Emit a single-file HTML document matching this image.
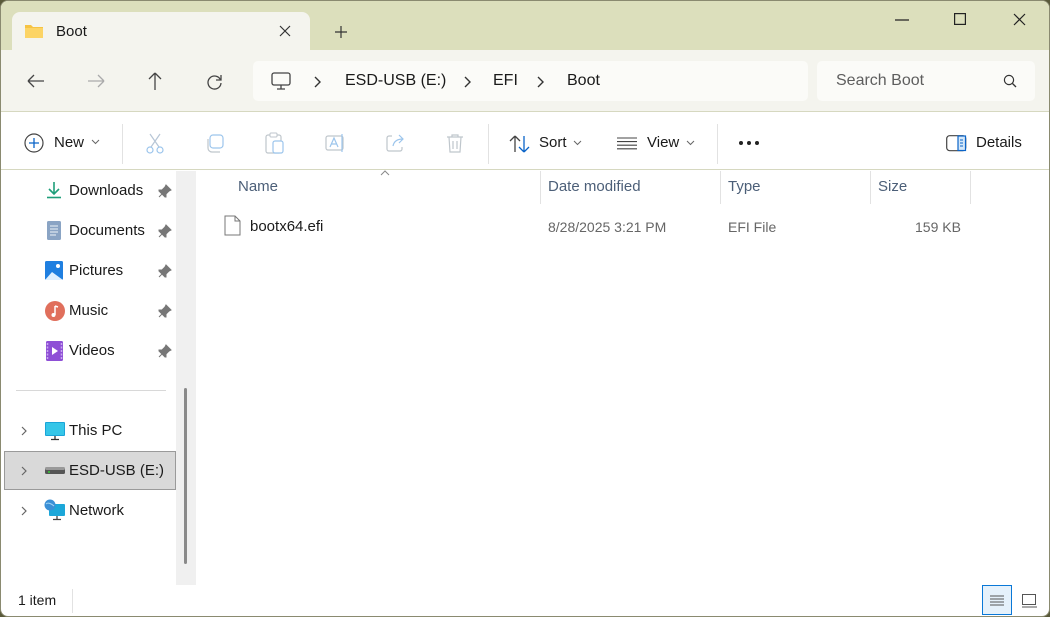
<!DOCTYPE html>
<html><head><meta charset="utf-8"><style>
*{margin:0;padding:0;box-sizing:border-box}
body{width:1050px;height:617px;background:#5a5a3a;font-family:"Liberation Sans",sans-serif;font-size:15px;color:#1a1a1a;position:relative;overflow:hidden}
.win{position:absolute;left:0;top:0;width:1050px;height:617px;border-radius:8px;background:#fff;overflow:hidden;border:1px solid #8a8a70}
.in{position:absolute;left:-1px;top:-1px;width:1050px;height:617px}
.title{position:absolute;left:0;top:0;width:100%;height:50px;background:#dcdfbc}
.tab{position:absolute;left:12px;top:12px;width:298px;height:39px;background:#f4f4ee;border-radius:8px 8px 0 0}
.addr{position:absolute;left:0;top:50px;width:100%;height:62px;background:#f4f4ee;border-bottom:1px solid #d6d8c0}
.box{position:absolute;background:#fbfbf8;border-radius:5px}
.tb{position:absolute;left:0;top:113px;width:100%;height:57px;background:#fff;border-bottom:1px solid #d6d8c0}
.t{position:absolute;white-space:nowrap}
svg{position:absolute}
.sep{position:absolute;width:1px;background:#e2e2e2}
.hdr{color:#4c5f78;font-size:15px}
</style></head><body>
<div class="win"><div class="in">
<div class="title"></div>
<div class="tab"></div>
<svg style="left:24px;top:23px" width="20" height="16" viewBox="0 0 20 16"><path d="M1 2h6l2 2h10v11H1z" fill="#f6c342"/><path d="M1 5h18v10H1z" fill="#fcd465"/></svg>
<div class="t" style="left:56px;top:23px;font-size:15px">Boot</div>
<svg style="left:279px;top:25px" width="12" height="12"><path d="M1 1L11 11M11 1L1 11" stroke="#333" stroke-width="1.2"/></svg>
<svg style="left:334px;top:25px" width="14" height="14"><path d="M7 1v12M1 7h12" stroke="#333" stroke-width="1.2"/></svg>
<svg style="left:895px;top:19px" width="14" height="2"><path d="M0 1h14" stroke="#222" stroke-width="1.2"/></svg>
<svg style="left:954px;top:13px" width="12" height="12"><rect x=".6" y=".6" width="10.8" height="10.8" fill="none" stroke="#222" stroke-width="1.2"/></svg>
<svg style="left:1013px;top:13px" width="13" height="13"><path d="M1 1L12 12M12 1L1 12" stroke="#222" stroke-width="1.2"/></svg>

<div class="addr"></div>
<svg style="left:27px;top:74px" width="18" height="14"><path d="M1 7h16M1 7l6-6M1 7l6 6" fill="none" stroke="#444" stroke-width="1.3"/></svg>
<svg style="left:87px;top:74px" width="18" height="14"><path d="M1 7h16M17 7l-6-6M17 7l-6 6" fill="none" stroke="#aaa" stroke-width="1.3"/></svg>
<svg style="left:148px;top:72px" width="14" height="18"><path d="M7 1v17M7 1L1 7M7 1l6 6" fill="none" stroke="#444" stroke-width="1.3"/></svg>
<svg style="left:207px;top:74px" width="16" height="16"><path d="M13.5 6A6.5 6.5 0 1 0 14 9" fill="none" stroke="#444" stroke-width="1.3"/><path d="M14 1v5H9" fill="none" stroke="#444" stroke-width="1.3"/></svg>
<div class="box" style="left:253px;top:61px;width:555px;height:40px"></div>
<svg style="left:271px;top:72px" width="20" height="19"><rect x="1" y="1" width="18" height="12" rx="2" fill="none" stroke="#444" stroke-width="1.3"/><path d="M10 13v4M6 17h8" stroke="#444" stroke-width="1.3"/></svg>
<svg style="left:314px;top:76px" width="8" height="12"><path d="M1 1l5 5-5 5" fill="none" stroke="#333" stroke-width="1.4"/></svg>
<div class="t" style="left:345px;top:72px;font-size:16px">ESD-USB (E:)</div>
<svg style="left:464px;top:76px" width="8" height="12"><path d="M1 1l5 5-5 5" fill="none" stroke="#333" stroke-width="1.4"/></svg>
<div class="t" style="left:493px;top:72px;font-size:16px">EFI</div>
<svg style="left:537px;top:76px" width="8" height="12"><path d="M1 1l5 5-5 5" fill="none" stroke="#333" stroke-width="1.4"/></svg>
<div class="t" style="left:567px;top:72px;font-size:16px">Boot</div>
<div class="box" style="left:817px;top:61px;width:218px;height:40px"></div>
<div class="t" style="left:836px;top:72px;font-size:16px;color:#5e5e5e">Search Boot</div>
<svg style="left:1003px;top:74px" width="14" height="14"><circle cx="6" cy="6" r="4.6" fill="none" stroke="#333" stroke-width="1.2"/><path d="M9.5 9.5L13 13" stroke="#333" stroke-width="1.3"/></svg>

<div class="tb"></div>
<svg style="left:24px;top:133px" width="20" height="20"><circle cx="10" cy="10" r="9" fill="none" stroke="#444" stroke-width="1.2"/><path d="M10 5v10M5 10h10" stroke="#0a64c8" stroke-width="1.3"/></svg>
<div class="t" style="left:54px;top:134px">New</div>
<svg style="left:91px;top:139px" width="9" height="6"><path d="M1 1l3.5 3.5L8 1" fill="none" stroke="#666"/></svg>
<div class="sep" style="left:122px;top:124px;height:40px"></div>
<svg style="left:146px;top:133px" width="18" height="21"><path d="M4 1l9 13M14 1L5 14" stroke="#b7c6d6" stroke-width="1.2"/><circle cx="4" cy="17" r="3" fill="none" stroke="#9cc5ec" stroke-width="1.2"/><circle cx="14" cy="17" r="3" fill="none" stroke="#9cc5ec" stroke-width="1.2"/></svg>
<svg style="left:205px;top:134px" width="20" height="20"><rect x="5" y="1" width="13" height="13" rx="3" fill="none" stroke="#9cc5ec" stroke-width="1.2"/><path d="M3 5v9a4 4 0 0 0 4 4h8" fill="none" stroke="#bfc6cc" stroke-width="1.2"/></svg>
<svg style="left:265px;top:132px" width="20" height="22"><rect x="1" y="3" width="15" height="18" rx="2" fill="none" stroke="#bfc6cc" stroke-width="1.2"/><rect x="5" y="1" width="7" height="4" rx="1" fill="#fff" stroke="#bfc6cc"/><rect x="8" y="9" width="10" height="12" rx="2" fill="#fff" stroke="#9cc5ec" stroke-width="1.2"/></svg>
<svg style="left:325px;top:133px" width="22" height="20"><rect x="1" y="3" width="17" height="14" rx="2" fill="none" stroke="#bfc6cc" stroke-width="1.2"/><path d="M5 14l4-9 4 9M6.5 11h5M17 1v18" fill="none" stroke="#9cc5ec" stroke-width="1.2"/></svg>
<svg style="left:386px;top:134px" width="20" height="19"><path d="M6 2H3a2 2 0 0 0-2 2v11a2 2 0 0 0 2 2h11a2 2 0 0 0 2-2v-2" fill="none" stroke="#bfc6cc" stroke-width="1.2"/><path d="M7 12c1-5 5-7 10-7M13 1l4 4-4 4" fill="none" stroke="#9cc5ec" stroke-width="1.2"/></svg>
<svg style="left:446px;top:133px" width="18" height="21"><path d="M1 4h16M6 4V2h6v2M3 4l1 15h10l1-15M7 8v8M11 8v8" fill="none" stroke="#bfc6cc" stroke-width="1.2"/></svg>
<div class="sep" style="left:488px;top:124px;height:40px"></div>
<svg style="left:509px;top:134px" width="22" height="20"><path d="M6 18V2M6 2L1 7M6 2l5 5" fill="none" stroke="#444" stroke-width="1.3"/><path d="M15 2v16M15 18l-5-5M15 18l5-5" fill="none" stroke="#0a64c8" stroke-width="1.3"/></svg>
<div class="t" style="left:539px;top:134px">Sort</div>
<svg style="left:573px;top:140px" width="9" height="6"><path d="M1 1l3.5 3.5L8 1" fill="none" stroke="#666"/></svg>
<svg style="left:617px;top:137px" width="20" height="13"><path d="M0 1h20M0 4.6h20M0 8.2h20M0 11.8h20" stroke="#444" stroke-width="1.1"/></svg>
<div class="t" style="left:647px;top:134px">View</div>
<svg style="left:686px;top:140px" width="9" height="6"><path d="M1 1l3.5 3.5L8 1" fill="none" stroke="#666"/></svg>
<div class="sep" style="left:717px;top:124px;height:40px"></div>
<svg style="left:738px;top:140px" width="24" height="6"><circle cx="3" cy="3" r="2" fill="#222"/><circle cx="11" cy="3" r="2" fill="#222"/><circle cx="19" cy="3" r="2" fill="#222"/></svg>
<svg style="left:946px;top:135px" width="21" height="17"><rect x=".7" y=".7" width="19" height="15" rx="3" fill="none" stroke="#444" stroke-width="1.2"/><rect x="12" y="1" width="7.5" height="14.5" fill="#d4e8fa" stroke="#0a64c8" stroke-width="1.2"/><path d="M14 5h3M14 8h3M14 11h3" stroke="#0a64c8"/></svg>
<div class="t" style="left:976px;top:134px">Details</div>

<!-- sidebar -->
<div style="position:absolute;left:176px;top:171px;width:20px;height:414px;background:#f0f0f0"></div>
<div style="position:absolute;left:184px;top:388px;width:3px;height:176px;background:#8a8a8a;border-radius:2px"></div>
<svg style="left:46px;top:181px" width="16" height="18"><path d="M8 1v12M3 8l5 5 5-5" fill="none" stroke="#1e9e7a" stroke-width="1.6"/><path d="M1 16.5h14" stroke="#1e9e7a" stroke-width="1.6"/></svg>
<div class="t" style="left:69px;top:182px">Downloads</div>
<svg style="left:47px;top:221px" width="14" height="19"><rect width="14" height="19" rx="1.5" fill="#8aa4c4"/><path d="M3 5h8M3 8h8M3 11h8M3 14h6" stroke="#eef3f8"/></svg>
<div class="t" style="left:69px;top:222px">Documents</div>
<svg style="left:45px;top:261px" width="18" height="19"><rect width="18" height="19" rx="1.5" fill="#1f7fe0"/><path d="M0 19l7-8 11 8z" fill="#dff0ff"/><circle cx="13" cy="5" r="2" fill="#fff"/></svg>
<div class="t" style="left:69px;top:262px">Pictures</div>
<svg style="left:45px;top:301px" width="20" height="20"><circle cx="10" cy="10" r="10" fill="#e06f5c"/><path d="M10 5v9M10 5l3 1" stroke="#fff" stroke-width="1.5" fill="none"/><circle cx="8.5" cy="14" r="2" fill="#fff"/></svg>
<div class="t" style="left:69px;top:302px">Music</div>
<svg style="left:46px;top:341px" width="17" height="20"><rect width="17" height="20" rx="1.5" fill="#8e4fd6"/><path d="M6 6v8l6-4z" fill="#fff"/><path d="M1.5 2v16M15.5 2v16" stroke="#c9a8f0" stroke-dasharray="2 1.5" stroke-width="1.5"/></svg>
<div class="t" style="left:69px;top:342px">Videos</div>
<svg style="left:158px;top:184px" width="14" height="14"><path d="M8 1l5 5-2 1-3 3 0 3-1 0-6-6 0-1 3 0 3-3z M4 10l-3 3" fill="#777" stroke="#777"/></svg>
<svg style="left:158px;top:224px" width="14" height="14"><path d="M8 1l5 5-2 1-3 3 0 3-1 0-6-6 0-1 3 0 3-3z M4 10l-3 3" fill="#777" stroke="#777"/></svg>
<svg style="left:158px;top:264px" width="14" height="14"><path d="M8 1l5 5-2 1-3 3 0 3-1 0-6-6 0-1 3 0 3-3z M4 10l-3 3" fill="#777" stroke="#777"/></svg>
<svg style="left:158px;top:304px" width="14" height="14"><path d="M8 1l5 5-2 1-3 3 0 3-1 0-6-6 0-1 3 0 3-3z M4 10l-3 3" fill="#777" stroke="#777"/></svg>
<svg style="left:158px;top:344px" width="14" height="14"><path d="M8 1l5 5-2 1-3 3 0 3-1 0-6-6 0-1 3 0 3-3z M4 10l-3 3" fill="#777" stroke="#777"/></svg>
<div style="position:absolute;left:16px;top:390px;width:150px;height:1px;background:#d8d8d8"></div>
<div style="position:absolute;left:4px;top:451px;width:172px;height:39px;background:#d9d9d9;border:1px solid #9a9a9a"></div>
<svg style="left:21px;top:426px" width="6" height="10"><path d="M1 1l4 4-4 4" fill="none" stroke="#666" stroke-width="1.2"/></svg>
<svg style="left:21px;top:466px" width="6" height="10"><path d="M1 1l4 4-4 4" fill="none" stroke="#666" stroke-width="1.2"/></svg>
<svg style="left:21px;top:506px" width="6" height="10"><path d="M1 1l4 4-4 4" fill="none" stroke="#666" stroke-width="1.2"/></svg>
<svg style="left:45px;top:422px" width="20" height="19"><rect width="20" height="14" rx="1" fill="#1aa4d8"/><rect x="1" y="1" width="18" height="12" fill="#35c6e8"/><path d="M10 14v3M6 17.5h8" stroke="#333" stroke-width="1.3"/></svg>
<div class="t" style="left:69px;top:422px">This PC</div>
<svg style="left:45px;top:466px" width="20" height="10"><rect y="2" width="20" height="6" rx="1.5" fill="#555"/><rect y="1" width="20" height="3" rx="1.5" fill="#999"/><circle cx="4" cy="6" r="1" fill="#3c3"/></svg>
<div class="t" style="left:69px;top:462px">ESD-USB (E:)</div>
<svg style="left:44px;top:499px" width="22" height="22"><rect x="5" y="5" width="16" height="12" rx="1" fill="#1ca7d9"/><path d="M13 17v3M9 20.5h8" stroke="#444" stroke-width="1.3"/><circle cx="6" cy="6" r="5.5" fill="#3a8fd6"/><path d="M2 5c2-2 6 0 8 2" stroke="#9fd4f5" fill="none"/></svg>
<div class="t" style="left:69px;top:502px">Network</div>

<!-- list -->
<svg style="left:380px;top:170px" width="10" height="6"><path d="M1 5l4-4 4 4" fill="none" stroke="#888"/></svg>
<div class="t hdr" style="left:238px;top:178px">Name</div>
<div class="sep" style="left:540px;top:171px;height:33px"></div>
<div class="t hdr" style="left:548px;top:178px">Date modified</div>
<div class="sep" style="left:720px;top:171px;height:33px"></div>
<div class="t hdr" style="left:728px;top:178px">Type</div>
<div class="sep" style="left:870px;top:171px;height:33px"></div>
<div class="t hdr" style="left:878px;top:178px">Size</div>
<div class="sep" style="left:970px;top:171px;height:33px"></div>
<svg style="left:224px;top:215px" width="17" height="21"><path d="M1 1h10l5 5v14H1z" fill="#fff" stroke="#777"/><path d="M11 1v5h5" fill="none" stroke="#777"/></svg>
<div class="t" style="left:250px;top:218px">bootx64.efi</div>
<div class="t" style="left:548px;top:219px;color:#666;font-size:14px">8/28/2025 3:21 PM</div>
<div class="t" style="left:728px;top:219px;color:#666;font-size:14px">EFI File</div>
<div class="t" style="left:915px;top:219px;color:#666;font-size:14px">159 KB</div>

<!-- status -->
<div class="t" style="left:18px;top:592px;font-size:14px">1 item</div>
<div class="sep" style="left:72px;top:589px;height:24px"></div>
<div style="position:absolute;left:982px;top:585px;width:30px;height:30px;background:#e5f1fb;border:1px solid #0a78d7"></div>
<svg style="left:990px;top:595px" width="14" height="11"><path d="M0 1h14M0 4h14M0 7h14M0 10h14" stroke="#555" stroke-width="1.1"/></svg>
<svg style="left:1022px;top:594px" width="15" height="14"><rect x=".5" y=".5" width="13" height="10" fill="none" stroke="#555"/><path d="M0 13h15" stroke="#555"/></svg>
</div></div>
</body></html>
